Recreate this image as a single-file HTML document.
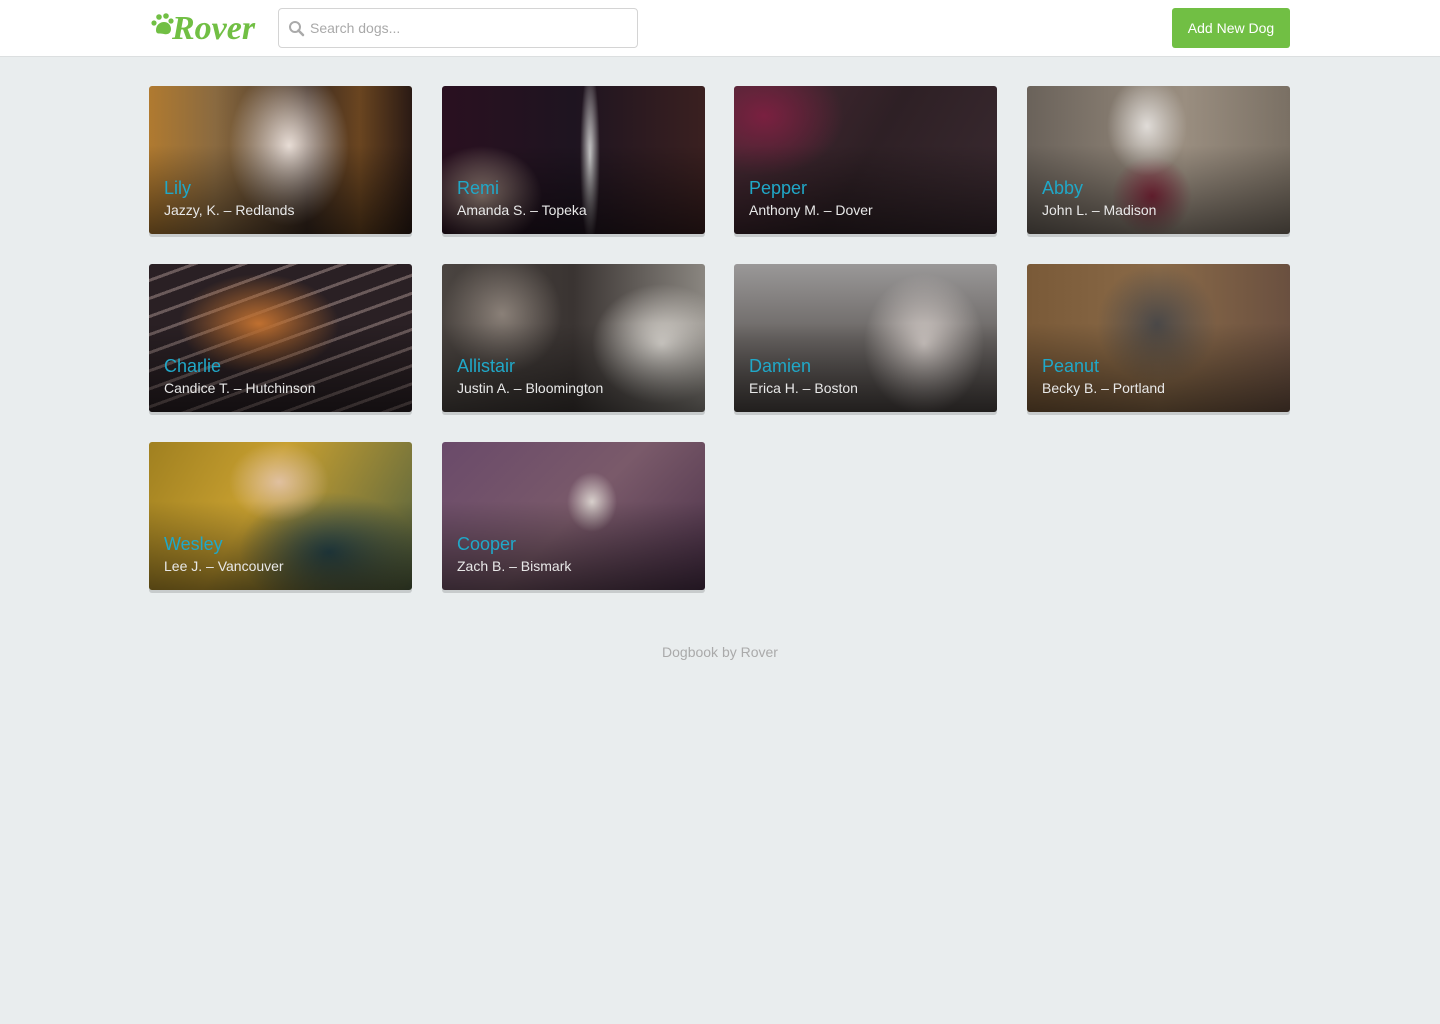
<!DOCTYPE html>
<html><head><meta charset="utf-8"><style>
*{box-sizing:border-box;margin:0;padding:0}
body{width:1440px;height:1024px;background:#e9edee;font-family:"Liberation Sans",sans-serif;position:relative;overflow:hidden}
.hdr{position:absolute;left:0;top:0;width:1440px;height:57px;background:#fff;border-bottom:1px solid #dcdfe0}
.logo{position:absolute;left:150px;top:6px}
.search{position:absolute;left:278px;top:8px;width:360px;height:40px;border:1px solid #d4d4d4;border-radius:4px;background:#fff}
.search span{position:absolute;left:31px;top:11px;font-size:14px;color:#a9a9a9}
.btn{position:absolute;left:1172px;top:8px;width:118px;height:40px;background:#71bf44;border-radius:3px;color:#fff;font-size:14px;text-align:center;line-height:40px}
.card{position:absolute;width:263px;height:148px;border-radius:3px;overflow:hidden;box-shadow:0 3px 0 #c7cbcc}
.card .ov{position:absolute;inset:0;background:linear-gradient(to bottom,rgba(0,0,0,0) 40%,rgba(0,0,0,.55) 100%)}
.card .t{position:absolute;left:15px;top:92px;font-size:18px;color:#20a8c8}
.card .s{position:absolute;left:15px;top:116px;font-size:14px;color:#e8e8e8}
.foot{position:absolute;left:0;width:1440px;top:644px;text-align:center;font-size:14px;color:#aaa}
</style></head><body>
<div class="hdr">
<svg class="logo" width="110" height="42" viewBox="0 0 110 42">
<g fill="#71bf44"><circle cx="4" cy="17" r="2.6"/><circle cx="9" cy="11" r="2.8"/><circle cx="16" cy="10" r="2.8"/><circle cx="21" cy="15" r="2.6"/><path d="M6 24c0-5 4-8 8-8s7 3 7 7c0 4-3 6-7 5-4-1-8 1-8-4z"/></g>
<text x="22" y="33" font-family="Liberation Serif,serif" font-style="italic" font-weight="bold" font-size="34" fill="#71bf44">Rover</text>
</svg>
<div class="search"><svg width="18" height="18" style="position:absolute;left:9px;top:11px" viewBox="0 0 18 18"><circle cx="7" cy="7" r="5" fill="none" stroke="#aaa" stroke-width="2"/><path d="M10.5 10.5L15 15" stroke="#aaa" stroke-width="2.5" stroke-linecap="round"/></svg><span>Search dogs...</span></div>
<div class="btn">Add New Dog</div>
</div>

<div class="card" style="left:149px;top:86px;background:radial-gradient(ellipse 60px 80px at 140px 60px,#e8ddd6,rgba(0,0,0,0) 100%),linear-gradient(90deg,#b07a30 0%,#8a6a40 25%,#3b2a20 60%,#6a4520 80%,#2a1a14 100%)"><div class="ov"></div><div class="t">Lily</div><div class="s">Jazzy, K. – Redlands</div></div>
<div class="card" style="left:442px;top:86px;background:radial-gradient(ellipse 10px 90px at 148px 70px,#ccc,rgba(0,0,0,0)),radial-gradient(ellipse 60px 50px at 40px 110px,#a08a80,rgba(0,0,0,0)),linear-gradient(90deg,#2a1020,#1e1420 50%,#3a2020)"><div class="ov"></div><div class="t">Remi</div><div class="s">Amanda S. – Topeka</div></div>
<div class="card" style="left:734px;top:86px;background:radial-gradient(ellipse 80px 60px at 30px 30px,#7a2040,rgba(0,0,0,0)),linear-gradient(120deg,#4a2a35,#2e2025 50%,#3a2a30)"><div class="ov"></div><div class="t">Pepper</div><div class="s">Anthony M. – Dover</div></div>
<div class="card" style="left:1027px;top:86px;background:radial-gradient(ellipse 40px 50px at 120px 40px,#e0dcd8,rgba(0,0,0,0)),radial-gradient(ellipse 40px 40px at 125px 110px,#8a2a40,rgba(0,0,0,0)),linear-gradient(90deg,#6a625a,#9a8e80 60%,#7a7064)"><div class="ov"></div><div class="t">Abby</div><div class="s">John L. – Madison</div></div>

<div class="card" style="left:149px;top:264px;background:radial-gradient(ellipse 80px 50px at 110px 60px,#c07030,rgba(0,0,0,0)),repeating-linear-gradient(160deg,#2a2024 0 14px,#6a5a5a 14px 17px),#2a2024"><div class="ov"></div><div class="t">Charlie</div><div class="s">Candice T. – Hutchinson</div></div>
<div class="card" style="left:442px;top:264px;background:radial-gradient(ellipse 70px 60px at 220px 80px,#e0dcd6,rgba(0,0,0,0)),radial-gradient(ellipse 60px 60px at 60px 50px,#8a8078,rgba(0,0,0,0)),linear-gradient(90deg,#4a4440,#3a3432 50%,#8a8680)"><div class="ov"></div><div class="t">Allistair</div><div class="s">Justin A. – Bloomington</div></div>
<div class="card" style="left:734px;top:264px;background:radial-gradient(ellipse 60px 70px at 190px 80px,#d8d0cc,rgba(0,0,0,0)),linear-gradient(180deg,#9a9898,#6a6664 50%,#4a4442)"><div class="ov"></div><div class="t">Damien</div><div class="s">Erica H. – Boston</div></div>
<div class="card" style="left:1027px;top:264px;background:radial-gradient(ellipse 60px 60px at 130px 60px,#4a4848,rgba(0,0,0,0)),linear-gradient(90deg,#7a5a38,#8a6a48 50%,#6a5040)"><div class="ov"></div><div class="t">Peanut</div><div class="s">Becky B. – Portland</div></div>

<div class="card" style="left:149px;top:442px;background:radial-gradient(ellipse 50px 40px at 130px 40px,#e0c0a0,rgba(0,0,0,0)),radial-gradient(ellipse 90px 60px at 180px 110px,#2a4a50,rgba(0,0,0,0)),linear-gradient(120deg,#a08020,#c8a030 40%,#506040)"><div class="ov"></div><div class="t">Wesley</div><div class="s">Lee J. – Vancouver</div></div>
<div class="card" style="left:442px;top:442px;background:radial-gradient(ellipse 25px 30px at 150px 60px,#d8d0cc,rgba(0,0,0,0)),linear-gradient(135deg,#6a4a6a,#7a5a6a 50%,#4a3048)"><div class="ov"></div><div class="t">Cooper</div><div class="s">Zach B. – Bismark</div></div>

<div class="foot">Dogbook by Rover</div>
</body></html>
